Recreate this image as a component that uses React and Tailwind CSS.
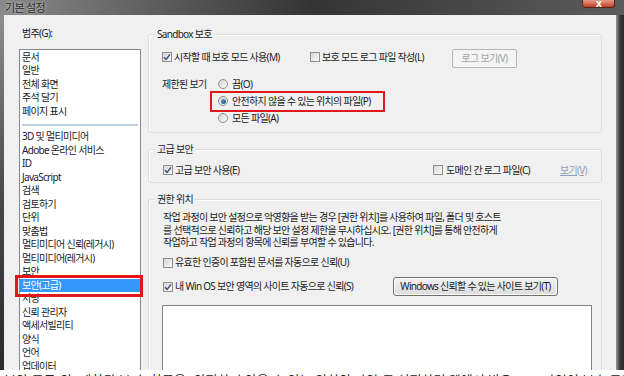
import React from 'react';

const topItems = ['문서', '일반', '전체 화면', '주석 달기', '페이지 표시'];
const mainItems = [
  '3D 및 멀티미디어',
  'Adobe 온라인 서비스',
  'ID',
  'JavaScript',
  '검색',
  '검토하기',
  '단위',
  '맞춤법',
  '멀티미디어 신뢰(레거시)',
  '멀티미디어(레거시)',
  '보안',
  '보안(고급)',
  '서명',
  '신뢰 관리자',
  '액세서빌리티',
  '양식',
  '언어',
  '업데이터',
];

function CheckBox({ checked }) {
  return (
    <span className="w-[10px] h-[10px] shrink-0 border border-[#8e8f8f] bg-linear-to-br from-[#d6d6d6] to-[#fbfbfb] flex items-center justify-center">
      {checked && (
        <svg width="8" height="8" viewBox="0 0 8 8">
          <path d="M1 4.2 L3.1 6.4 L7 1.4" fill="none" stroke="#3b4d78" strokeWidth="1.5" />
        </svg>
      )}
    </span>
  );
}

function Radio({ checked }) {
  return (
    <span className="w-[10px] h-[10px] shrink-0 rounded-full border border-[#8e8f8f] bg-linear-to-br from-[#d4d4d4] to-[#fbfbfb] flex items-center justify-center">
      {checked && <span className="w-[5px] h-[5px] rounded-full bg-linear-to-br from-[#5fa6d6] to-[#1d4f7e]" />}
    </span>
  );
}

function GroupBox({ title, className, children }) {
  return (
    <div className={`relative border border-[#d5dfe5] rounded-[3px] shadow-[inset_1px_1px_0_#fff] ${className}`}>
      <span className="absolute -top-[7px] left-[6px] px-[2px] bg-[#f0f0f0] leading-[12px]">{title}</span>
      {children}
    </div>
  );
}

export default function App() {
  return (
    <div className="w-[624px] h-[376px] bg-white overflow-hidden font-['Noto_Sans','Noto_Sans_CJK_KR',sans-serif] text-[10px] tracking-[-0.7px] text-[#1b1b1b]">
      <div className="h-[370px] flex flex-col overflow-hidden">
        {/* title bar */}
        <div className="h-[15px] shrink-0 flex items-start bg-linear-to-r from-[#8a8a8a] via-[#343434] to-[#5c5c5c]">
          <span className="ml-[5px] mt-[1px] text-[11px] leading-[13px] text-[#2a2a2a] [text-shadow:0_0_3px_#e0e0e0]">기본 설정</span>
          <span className="flex-1" />
          <div className="w-[33px] h-[8px] mr-[9px] rounded-b-[4px] border border-t-0 border-[#5a2418] bg-linear-to-b from-[#e49a86] to-[#c23d27] flex items-end justify-center overflow-hidden">
            <span className="text-white text-[10px] leading-[8px] font-bold">x</span>
          </div>
        </div>

        <div className="flex-1 flex min-h-0">
          <div className="w-[4px] shrink-0 bg-linear-to-b from-[#8e8e8e] via-[#4a4a4a] to-[#2a2a2a]" />

          <div className="flex-1 bg-[#f0f0f0] flex overflow-hidden">
            {/* categories */}
            <div className="ml-[15px] w-[122px] flex flex-col">
              <div className="mt-[12px] h-[12px] leading-[12px] pl-[3px]">범주(G):</div>
              <div className="mt-[10px] flex-1 bg-white border border-[#828790] pt-[0.5px] relative">
                {topItems.map((t) => (
                  <div key={t} className="h-[13.5px] leading-[13.5px] pl-[2px]">{t}</div>
                ))}
                <div className="mt-[6px] mb-[4px] mx-[2px] h-[2px] bg-[#b7d0dc]" />
                {mainItems.map((t) =>
                  t === '보안(고급)' ? (
                    <div key={t} className="relative h-[13.5px] leading-[13.5px] pl-[2px] bg-[#3399ff] text-white">
                      {t}
                      <div className="absolute -top-[4px] -bottom-[5px] -left-[5px] -right-[3px] border-[3px] border-[#e0171b]" />
                    </div>
                  ) : (
                    <div key={t} className="h-[13.5px] leading-[13.5px] pl-[2px]">{t}</div>
                  )
                )}
              </div>
            </div>

            {/* settings */}
            <div className="ml-[7px] w-[454px] flex flex-col">
              <GroupBox title="Sandbox 보호" className="mt-[19px] h-[99px] shrink-0">
                <div className="mt-[12px] h-[20px] pl-[13px] flex items-center">
                  <div className="w-[148px] flex items-center gap-[2px]">
                    <CheckBox checked />
                    <span>시작할 때 보호 모드 사용(M)</span>
                  </div>
                  <div className="w-[142px] flex items-center gap-[2px]">
                    <CheckBox />
                    <span>보호 모드 로그 파일 작성(L)</span>
                  </div>
                  <div className="w-[65px] h-[19px] mt-[3px] border border-[#b4b7ba] rounded-[2px] bg-[#f4f4f4] text-[#a2a2a2] flex items-center justify-center">
                    로그 보기(V)
                  </div>
                </div>
                <div className="mt-[8.5px] pl-[13px] flex">
                  <div className="w-[56px] h-[17px] flex items-center">제한된 보기</div>
                  <div className="flex flex-col">
                    <div className="h-[17px] flex items-center gap-[4px]">
                      <Radio />
                      <span>끔(O)</span>
                    </div>
                    <div className="relative h-[17px] flex items-center gap-[4px]">
                      <Radio checked />
                      <span>안전하지 않을 수 있는 위치의 파일(P)</span>
                      <div className="absolute -left-[8px] -top-[2px] -bottom-[2px] w-[175px] border-[2px] border-[#e0171b]" />
                    </div>
                    <div className="h-[17px] flex items-center gap-[4px]">
                      <Radio />
                      <span>모든 파일(A)</span>
                    </div>
                  </div>
                </div>
              </GroupBox>

              <GroupBox title="고급 보안" className="mt-[16px] h-[34px] shrink-0">
                <div className="mt-[12px] h-[16px] pl-[14px] flex items-center">
                  <div className="w-[270px] flex items-center gap-[2px]">
                    <CheckBox checked />
                    <span>고급 보안 사용(E)</span>
                  </div>
                  <div className="w-[127px] flex items-center gap-[3px]">
                    <CheckBox />
                    <span>도메인 간 로그 파일(C)</span>
                  </div>
                  <span className="text-[#8da2c0] underline">보기(V)</span>
                </div>
              </GroupBox>

              <GroupBox title="권한 위치" className="mt-[16px] h-[220px] shrink-0 flex flex-col">
                <div className="mt-[11px] pl-[14px] leading-[12.5px]">
                  <div>작업 과정이 보안 설정으로 악영향을 받는 경우 [권한 위치]를 사용하여 파일, 폴더 및 호스트</div>
                  <div>를 선택적으로 신뢰하고 해당 보안 설정 제한을 무시하십시오. [권한 위치]를 통해 안전하게</div>
                  <div>작업하고 작업 과정의 항목에 신뢰를 부여할 수 있습니다.</div>
                </div>
                <div className="mt-[6.5px] h-[16px] pl-[14px] flex items-center gap-[2px]">
                  <CheckBox />
                  <span>유효한 인증이 포함된 문서를 자동으로 신뢰(U)</span>
                </div>
                <div className="mt-[7px] h-[20px] pl-[14px] flex items-center gap-[2px]">
                  <CheckBox checked />
                  <span>내 Win OS 보안 영역의 사이트 자동으로 신뢰(S)</span>
                  <div className="ml-auto mr-[43px] w-[165px] h-[19px] border border-[#707070] rounded-[3px] bg-linear-to-b from-[#f3f3f3] to-[#dcdcdc] shadow-[inset_0_0_0_1px_#fcfcfc] flex items-center justify-center">
                    Windows 신뢰할 수 있는 사이트 보기(T)
                  </div>
                </div>
                <div className="mt-[9px] ml-[13px] mr-[9px] h-[120px] bg-white border border-[#828790]" />
              </GroupBox>
            </div>
          </div>

          <div className="w-[8px] shrink-0 bg-linear-to-r from-[#9a9a9a] via-[#3a3a3a] to-[#2a2a2a]" />
        </div>
      </div>

      {/* caption, cut off at the bottom */}
      <div className="h-[6px] overflow-hidden pl-[4px] pt-[2px] text-[13px] leading-[16px] tracking-[0px] text-[#222] whitespace-nowrap">
        보안(고급)의 [제한된 보기] 항목을 [안전하지 않을 수 있는 위치의 파일]로 설정하면 웹에서 받은 PDF 파일이 보호 모드로 열립니다.
      </div>
    </div>
  );
}
